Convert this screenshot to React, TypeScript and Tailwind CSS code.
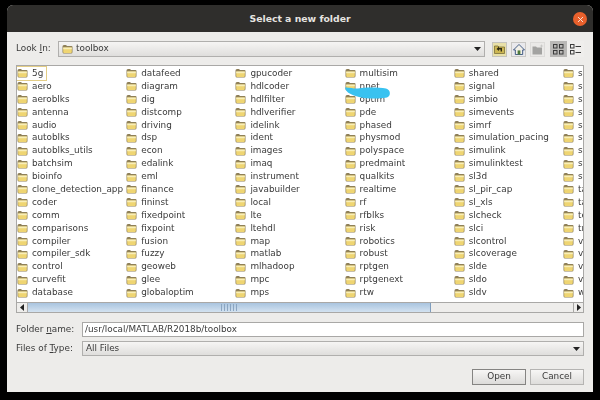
import { X } from 'lucide-react';

const COLUMNS = [
  ['5g', 'aero', 'aeroblks', 'antenna', 'audio', 'autoblks', 'autoblks_utils', 'batchsim', 'bioinfo', 'clone_detection_app', 'coder', 'comm', 'comparisons', 'compiler', 'compiler_sdk', 'control', 'curvefit', 'database'],
  ['datafeed', 'diagram', 'dig', 'distcomp', 'driving', 'dsp', 'econ', 'edalink', 'eml', 'finance', 'fininst', 'fixedpoint', 'fixpoint', 'fusion', 'fuzzy', 'geoweb', 'glee', 'globaloptim'],
  ['gpucoder', 'hdlcoder', 'hdlfilter', 'hdlverifier', 'idelink', 'ident', 'images', 'imaq', 'instrument', 'javabuilder', 'local', 'lte', 'ltehdl', 'map', 'matlab', 'mlhadoop', 'mpc', 'mps'],
  ['multisim', 'nnet', 'optim', 'pde', 'phased', 'physmod', 'polyspace', 'predmaint', 'qualkits', 'realtime', 'rf', 'rfblks', 'risk', 'robotics', 'robust', 'rptgen', 'rptgenext', 'rtw'],
  ['shared', 'signal', 'simbio', 'simevents', 'simrf', 'simulation_pacing', 'simulink', 'simulinktest', 'sl3d', 'sl_pir_cap', 'sl_xls', 'slcheck', 'slci', 'slcontrol', 'slcoverage', 'slde', 'sldo', 'sldv'],
  ['s', 's', 's', 's', 's', 's', 'sy', 'sy', 'sy', 'ta', 'ta', 'te', 'tr', 'v', 'v', 'v', 'v', 'w'],
];

function Folder() {
  return (
    <svg width="11" height="10" viewBox="0 0 11 10" className="shrink-0">
      <path d="M0.5 2.5 Q0.5 1 2 1 H4 L5 2 H9.5 Q10.5 2 10.5 3 V8 Q10.5 9.5 9 9.5 H2 Q0.5 9.5 0.5 8 Z" fill="#8f8058" />
      <path d="M1.2 3.6 H9.8 V8 Q9.8 8.9 9 8.9 H2 Q1.2 8.9 1.2 8 Z" fill="#efd572" />
      <path d="M1.2 3.6 H9.8 V5.2 H1.2 Z" fill="#f8eeb8" />
    </svg>
  );
}

function ToolButton({ active, children }: { active?: boolean; children: React.ReactNode }) {
  return (
    <div className={`flex h-[16px] w-[17px] items-center justify-center ${active ? 'bg-[#b9b8b6]' : 'bg-[#efeeec]'}`}>
      {children}
    </div>
  );
}

function Caret() {
  return (
    <svg width="7" height="4" viewBox="0 0 7 4">
      <path d="M0 0 H7 L3.5 4 Z" fill="#222" />
    </svg>
  );
}

function ToolIcons() {
  return (
    <div className="ml-[7px] flex items-center">
      <div className="flex h-[15px] w-[15px] items-center justify-center border border-[#c4c3bd] bg-[#e8e0a8]">
        <svg width="11" height="10" viewBox="0 0 11 10">
          <path d="M0.5 2 H4 L5 3 H10.5 V9.5 H0.5 Z" fill="#cdb752" stroke="#6b6130" strokeWidth="0.7" />
          <path d="M2.5 5 L5 2.5 V4 H8 V7.5 H6.6 V5.5 H5 V7 Z" fill="#2d2a14" />
        </svg>
      </div>
      <div className="ml-[4px] flex h-[15px] w-[15px] items-center justify-center border border-[#c8c7c4] bg-[#e9e9ec]">
        <svg width="12" height="11" viewBox="0 0 13 12">
          <path d="M6.5 0.5 L12.5 6.5 H10.5 V11.5 H2.5 V6.5 H0.5 Z" fill="#f2f0e8" stroke="#35507c" strokeWidth="1" />
          <rect x="5" y="7" width="3" height="4.5" fill="#4e7a3a" />
        </svg>
      </div>
      <div className="ml-[4px] flex h-[15px] w-[15px] items-center justify-center border border-[#dcdbd9] bg-[#eae9e7]">
        <svg width="12" height="11" viewBox="0 0 12 11">
          <path d="M0.5 2.5 H4 L5 3.5 H10 V10.5 H0.5 Z" fill="#a3a3a1" />
          <path d="M9.5 0 L10 1.5 L11.5 2 L10 2.5 L9.5 4 L9 2.5 L7.5 2 L9 1.5 Z" fill="#c5c5c3" />
        </svg>
      </div>
      <div className="ml-[5px] flex">
        <ToolButton active>
          <svg width="11" height="11" viewBox="0 0 11 11" fill="none" stroke="#3c3c3c" strokeWidth="1">
            <rect x="0.5" y="0.5" width="3.5" height="3.5" />
            <rect x="6.5" y="0.5" width="3.5" height="3.5" />
            <rect x="0.5" y="6.5" width="3.5" height="3.5" />
            <rect x="6.5" y="6.5" width="3.5" height="3.5" />
          </svg>
        </ToolButton>
        <ToolButton>
          <svg width="11" height="11" viewBox="0 0 11 11" fill="none" stroke="#3c3c3c" strokeWidth="1">
            <rect x="0.5" y="0.5" width="3.5" height="3.5" />
            <rect x="0.5" y="6.5" width="3.5" height="3.5" />
            <path d="M5.5 2.5 H11 M5.5 8.5 H11" />
          </svg>
        </ToolButton>
      </div>
    </div>
  );
}

function FileList() {
  return (
    <div className="relative mt-[8px] h-[238px] w-[568px] overflow-hidden border border-[#a9a8a6] bg-white pt-[1px]">
      <div className="flex">
        {COLUMNS.map((col, c) => (
          <div key={c} className="w-[109.2px] shrink-0">
            {col.map((name, r) => (
              <div key={r} className="h-[12.9px] whitespace-nowrap leading-none">
                <div className={`flex h-full w-fit items-center gap-[4px] pr-[3px] ${c === 0 && r === 0 ? 'outline outline-1 outline-[#e3cd85]' : ''}`}>
                  <Folder />
                  <span>{name}</span>
                </div>
              </div>
            ))}
          </div>
        ))}
      </div>
      {/* blue marker scribble over nnet / optim */}
      <svg width="46" height="12" viewBox="0 0 46 12" className="absolute left-[328px] top-[21px]">
        <path d="M0 0.5 C4 0 9 2 13 1.5 C22 0 34 0.5 41 1.5 C46 3 46 9 42 10.5 C34 12 22 12 14 10 C7 8 1 6 0 0.5 Z" fill="#39c2f0" />
      </svg>
    </div>
  );
}

function ScrollBar() {
  return (
    <div className="-mt-[1px] flex h-[11px] w-[568px] border border-[#a9a8a6] bg-[#eeedeb]">
      <div className="flex w-[11px] items-center justify-center border-r border-[#a9a8a6]">
        <svg width="4" height="7" viewBox="0 0 4 7">
          <path d="M4 0 V7 L0 3.5 Z" fill="#222" />
        </svg>
      </div>
      <div className="flex w-[403px] items-center justify-center border-r border-[#7f9dbd] bg-gradient-to-b from-[#a9c4df] to-[#d3e2f0]">
        <div className="h-[7px] w-[17px] bg-[repeating-linear-gradient(90deg,#8ba6c2_0,#8ba6c2_1px,transparent_1px,transparent_3px)]" />
      </div>
      <div className="flex-1" />
      <div className="flex w-[10px] items-center justify-center border-l border-[#a9a8a6]">
        <svg width="4" height="7" viewBox="0 0 4 7">
          <path d="M0 0 V7 L4 3.5 Z" fill="#222" />
        </svg>
      </div>
    </div>
  );
}

export default function App() {
  return (
    <div className="h-[400px] w-[600px] overflow-hidden bg-black pl-[7px] pt-[5px] font-['DejaVu_Sans',sans-serif] text-[8.85px] text-[#3a3a3a]">
      <div className="flex h-[387px] w-[586px] flex-col overflow-hidden rounded-t-[6px] bg-[#edecea] blur-[0.35px]">
        <div className="relative flex h-[27px] shrink-0 items-center justify-center bg-[#2f2e2c] text-[9.3px] font-bold text-[#e6e4e0]">
          Select a new folder
          <div className="absolute right-[6px] top-[7px] flex h-[14px] w-[14px] items-center justify-center rounded-full bg-[#e8602c]">
            <X size={9} strokeWidth={2.5} color="#f8e8e0" />
          </div>
        </div>

        <div className="flex flex-1 flex-col px-[9px] pt-[9px]">
          <div className="flex h-[16px] items-center">
            <span className="w-[42px] shrink-0">Look <span className="underline">I</span>n:</span>
            <div className="flex h-[16px] w-[428px] items-center border border-[#b0afad] bg-gradient-to-b from-[#f6f5f4] to-[#dfdedc] pl-[3px] pr-[3px]">
              <Folder />
              <span className="ml-[3px] flex-1">toolbox</span>
              <Caret />
            </div>
            <ToolIcons />
          </div>

          <FileList />
          <ScrollBar />

          <div className="mt-[9px] flex h-[15px] items-center">
            <span className="w-[66px] shrink-0">Folder <span className="underline">n</span>ame:</span>
            <div className="flex h-[15px] flex-1 items-center border border-[#a9a8a6] bg-white pl-[2px]">/usr/local/MATLAB/R2018b/toolbox</div>
          </div>
          <div className="mt-[4px] flex h-[15px] items-center">
            <span className="w-[66px] shrink-0">Files of <span className="underline">T</span>ype:</span>
            <div className="flex h-[15px] flex-1 items-center justify-between border border-[#b0afad] bg-gradient-to-b from-[#f6f5f4] to-[#dfdedc] pl-[3px] pr-[3px]">
              All Files
              <Caret />
            </div>
          </div>

          <div className="mt-[13px] flex justify-end gap-[4px]">
            <div className="flex h-[16px] w-[54px] items-center justify-center border border-[#858482] bg-gradient-to-b from-[#f7f6f5] to-[#dcdbd9]">Open</div>
            <div className="flex h-[16px] w-[54px] items-center justify-center border border-[#b5b4b2] bg-gradient-to-b from-[#f7f6f5] to-[#dedddb]">Cancel</div>
          </div>
        </div>
      </div>
    </div>
  );
}
